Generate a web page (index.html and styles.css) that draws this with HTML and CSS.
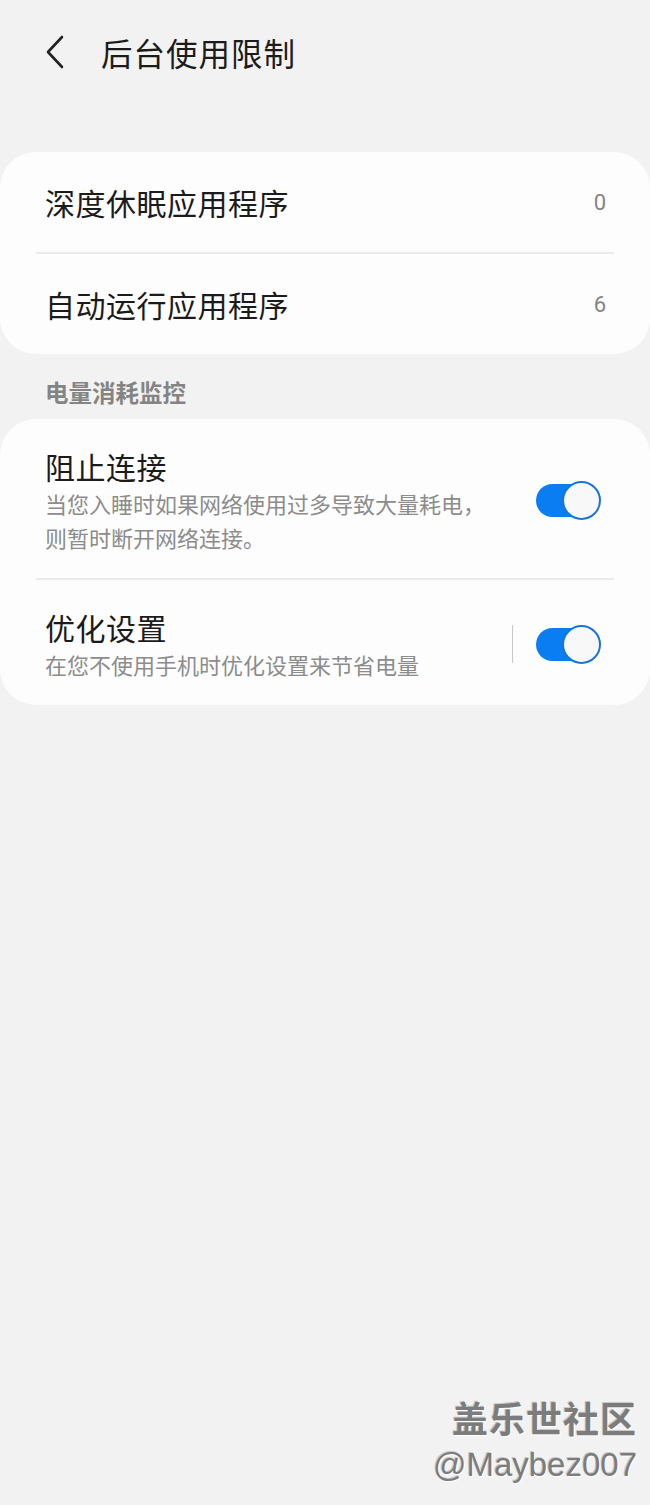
FILE: index.html
```html
<!DOCTYPE html>
<html lang="zh-CN">
<head>
    <meta charset="UTF-8">
    <meta name="viewport" content="width=device-width, initial-scale=1.0">
    <title>后台使用限制</title>
    <link rel="stylesheet" href="styles.css">
</head>
<body>
    <div class="header">
        <svg class="back" width="24" height="36" viewBox="0 0 24 36">
            <path d="M19 3 L5 18 L19 33" fill="none" stroke="#222" stroke-width="2.6" stroke-linecap="round" stroke-linejoin="round"/>
        </svg>
        <h1>后台使用限制</h1>
    </div>

    <div class="card">
        <div class="row">
            <span class="label">深度休眠应用程序</span>
            <span class="count">0</span>
        </div>
        <div class="divider"></div>
        <div class="row">
            <span class="label">自动运行应用程序</span>
            <span class="count">6</span>
        </div>
    </div>

    <div class="section-title">电量消耗监控</div>

    <div class="card">
        <div class="row switch-row">
            <div class="text">
                <div class="label">阻止连接</div>
                <div class="desc">当您入睡时如果网络使用过多导致大量耗电，<br>则暂时断开网络连接。</div>
            </div>
            <div class="toggle on"><span class="knob"></span></div>
        </div>
        <div class="divider"></div>
        <div class="row switch-row">
            <div class="text">
                <div class="label">优化设置</div>
                <div class="desc">在您不使用手机时优化设置来节省电量</div>
            </div>
            <span class="vline"></span>
            <div class="toggle on"><span class="knob"></span></div>
        </div>
    </div>

    <div class="watermark">
        <div class="wm-title">盖乐世社区</div>
        <div class="wm-user">@Maybez007</div>
    </div>
</body>
</html>
```

FILE: styles.css
```css
body {
    margin: 0;
    height: 1505px;
    background-color: #f2f2f2;
    font-family: "Noto Sans CJK SC", "Noto Sans", sans-serif;
    color: #1b1b1b;
    position: relative;
    overflow: hidden;
}

.header {
    height: 104px;
    display: flex;
    align-items: center;
    padding-left: 43px;
}

.back {
    display: block;
}

.header h1 {
    margin: 0 0 0 34px;
    font-size: 31.5px;
    font-weight: 400;
    line-height: 40px;
    letter-spacing: 1px;
}

.card {
    background-color: #fdfdfd;
    border-radius: 36px;
}

.header + .card {
    margin-top: 48px;
}

.row {
    height: 100px;
    display: flex;
    align-items: center;
    justify-content: space-between;
    padding: 0 44px 0 45px;
}

.label {
    font-size: 30px;
    line-height: 40px;
    letter-spacing: 0.5px;
}

.count {
    font-size: 22px;
    color: #858585;
    font-family: "Roboto", sans-serif;
}

.divider {
    height: 2px;
    margin: 0 36px;
    background-color: #ebebeb;
}

.section-title {
    padding: 26px 45px 15px;
    font-size: 23.5px;
    line-height: 24px;
    font-weight: 700;
    color: #848484;
}

.switch-row {
    height: auto;
    padding: 27px 49px 24px 45px;
}

.text {
    flex: 1;
}

.desc {
    font-size: 22px;
    line-height: 34px;
    color: #8c8c8c;
}

.vline {
    width: 1px;
    height: 38px;
    background-color: #c8c8c8;
    margin-right: 23px;
}

.toggle {
    position: relative;
    width: 65px;
    height: 39px;
}

.toggle.on::before {
    content: "";
    position: absolute;
    left: 0;
    top: 3px;
    width: 56px;
    height: 33px;
    border-radius: 17px;
    background-color: #0b7df2;
}

.knob {
    position: absolute;
    right: 0;
    top: 0;
    width: 35px;
    height: 35px;
    border-radius: 50%;
    background-color: #f8f8f8;
    border: 2px solid #1a74d8;
}

.watermark {
    position: absolute;
    right: 13px;
    top: 1392px;
    text-align: right;
    color: #7c7c7c;
    text-shadow: 1px 1px 0 #ffffff, -1px -1px 0 #c8c8c8;
}

.wm-title {
    font-size: 36px;
    font-weight: 700;
    line-height: 50px;
    letter-spacing: 1px;
}

.wm-user {
    font-family: "Liberation Sans", sans-serif;
    font-size: 33px;
    line-height: 46px;
}
```
